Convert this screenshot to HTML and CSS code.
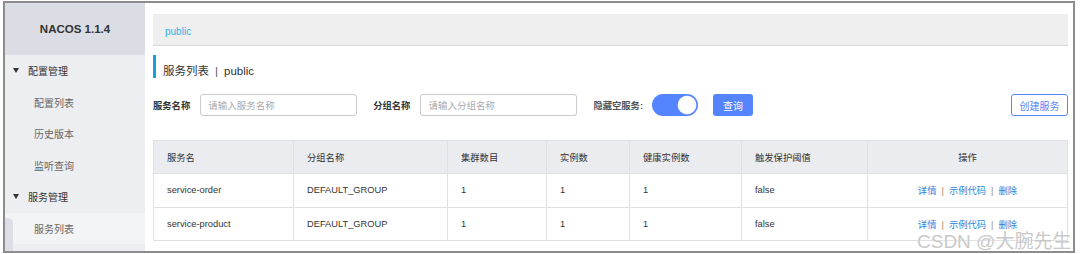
FILE: index.html
```html
<!DOCTYPE html>
<html lang="zh-CN">
<head>
<meta charset="utf-8">
<title>Nacos</title>
<link rel="stylesheet" href="styles.css">
</head>
<body>
<div class="frame">
  <aside class="sidebar">
    <div class="brand">NACOS 1.1.4</div>
    <ul class="menu">
      <li class="group"><span class="caret"></span>配置管理</li>
      <li class="sub">配置列表</li>
      <li class="sub">历史版本</li>
      <li class="sub">监听查询</li>
      <li class="group"><span class="caret"></span>服务管理</li>
      <li class="sub active"><span class="tab"></span>服务列表</li>
    </ul>
  </aside>
  <main class="main">
    <div class="crumb">public</div>
    <h1 class="title">服务列表<span class="sep">|</span>public</h1>
    <div class="filters">
      <label class="lbl">服务名称</label>
      <div class="input">请输入服务名称</div>
      <label class="lbl lbl2">分组名称</label>
      <div class="input">请输入分组名称</div>
      <label class="lbl lbl2 lbl-gray">隐藏空服务:</label>
      <div class="switch"><span class="knob"></span></div>
      <button class="btn primary">查询</button>
      <div class="spacer"></div>
      <button class="btn outline">创建服务</button>
    </div>
    <table class="tbl">
      <colgroup>
        <col style="width:140px"><col style="width:154px"><col style="width:99px"><col style="width:83px"><col style="width:112px"><col style="width:126px"><col>
      </colgroup>
      <thead>
        <tr><th>服务名</th><th>分组名称</th><th>集群数目</th><th>实例数</th><th>健康实例数</th><th>触发保护阈值</th><th class="c">操作</th></tr>
      </thead>
      <tbody>
        <tr><td>service-order</td><td>DEFAULT_GROUP</td><td>1</td><td>1</td><td>1</td><td>false</td><td class="c"><a>详情</a><span class="bar">|</span><a>示例代码</a><span class="bar">|</span><a>删除</a></td></tr>
        <tr><td>service-product</td><td>DEFAULT_GROUP</td><td>1</td><td>1</td><td>1</td><td>false</td><td class="c"><a>详情</a><span class="bar">|</span><a>示例代码</a><span class="bar">|</span><a>删除</a></td></tr>
      </tbody>
    </table>
  </main>
  <div class="watermark">CSDN @大腕先生</div>
</div>
</body>
</html>
```
FILE: styles.css
```css
* { box-sizing: border-box; }
html, body { margin: 0; padding: 0; background: #fff; }
body {
  font-family: "Liberation Sans", "Noto Sans CJK SC", sans-serif;
  font-size: 10px;
  color: #333;
  width: 1080px;
  height: 254px;
  overflow: hidden;
}
.frame {
  position: relative;
  margin: 1px 0 0 3px;
  width: 1072px;
  height: 252px;
  border: 2px solid #8c8c8c;
  display: flex;
  overflow: hidden;
}
.sidebar {
  width: 140px;
  flex: none;
  background: #eceef2;
  display: flex;
  flex-direction: column;
}
.brand {
  height: 52px;
  background: #dadde4;
  display: flex;
  align-items: center;
  justify-content: center;
  font-weight: bold;
  font-size: 11.5px;
  color: #333;
}
.menu { list-style: none; margin: 0; padding: 0; }
.menu li {
  height: 31.5px;
  display: flex;
  align-items: center;
  position: relative;
}
.menu .group { padding-left: 8px; color: #333; }
.caret {
  width: 0; height: 0;
  border-left: 3.5px solid transparent;
  border-right: 3.5px solid transparent;
  border-top: 5px solid #333;
  margin-right: 9px;
}
.menu .sub { padding-left: 29px; color: #666; }
.menu .active { background: #f3f4f6; }
.tab {
  position: absolute;
  left: 0; top: 5px; bottom: -10px;
  width: 8px;
  background: #dcdfe5;
  border-top-right-radius: 6px 4px;
}
.main {
  flex: 1;
  padding: 11px 5px 0 8px;
  background: #fff;
}
.crumb {
  height: 32px;
  background: #efefef;
  border-bottom: 1px solid #d9d9d9;
  padding: 3px 0 0 12px;
  display: flex;
  align-items: center;
  color: #2bb2e6;
  font-size: 10px;
}
.title {
  margin: 9px 0 0 0;
  height: 23px;
  border-left: 3px solid #1b9ed9;
  padding: 0 0 0 7px;
  display: flex;
  align-items: flex-end;
  font-size: 11.5px;
  line-height: 14px;
  font-weight: normal;
  color: #333;
}
.sep { margin: 0 6px; color: #555; }
.filters {
  margin-top: 16px;
  height: 22px;
  display: flex;
  align-items: center;
}
.lbl { font-weight: bold; color: #333; margin-right: 10px; font-size: 9.3px; }
.lbl2 { margin-left: 16px; }
.lbl-gray { color: #555; margin-right: 9px; }
.input {
  width: 157px;
  height: 22px;
  border: 1px solid #c9c9cf;
  border-radius: 3px;
  padding-left: 7px;
  display: flex;
  align-items: center;
  color: #aaa;
  font-size: 9.5px;
}
.switch {
  width: 46px;
  height: 22px;
  border-radius: 11px;
  background: #5584ff;
  position: relative;
  margin-right: 15px;
}
.knob {
  position: absolute;
  right: 2px; top: 2px;
  width: 18px; height: 18px;
  border-radius: 50%;
  background: #fff;
  box-shadow: 0 0 0 0.5px #c6d3ff;
}
.btn {
  height: 22px;
  border-radius: 3px;
  font-family: inherit;
  font-size: 10px;
  padding: 0;
  display: flex;
  align-items: center;
  justify-content: center;
}
.primary { width: 40px; background: #5584ff; color: #fff; border: none; }
.outline { width: 57px; background: #fff; color: #5a86f5; border: 1px solid #5584ff; }
.spacer { flex: 1; }
.tbl {
  margin-top: 24px;
  width: 915px;
  border-collapse: collapse;
  table-layout: fixed;
  border: 1px solid #e0e1e5;
  font-size: 9.3px;
}
.tbl th, .tbl td {
  border: 1px solid #e0e1e5;
  text-align: left;
  padding: 0 0 0 13px;
  font-weight: normal;
  white-space: nowrap;
}
.tbl th { height: 33px; background: #ebecf0; color: #333; }
.tbl td { height: 33.5px; color: #333; }
.tbl .c { text-align: center; padding-left: 0; }
.tbl a { color: #2f7fd8; }
.bar { color: #a08a6a; margin: 0 5px; }
.watermark {
  position: absolute;
  left: 912px;
  top: 223px;
  font-size: 19px;
  color: #c9c9c9;
  white-space: nowrap;
  text-shadow: 0 0 1px #fff;
}
```
